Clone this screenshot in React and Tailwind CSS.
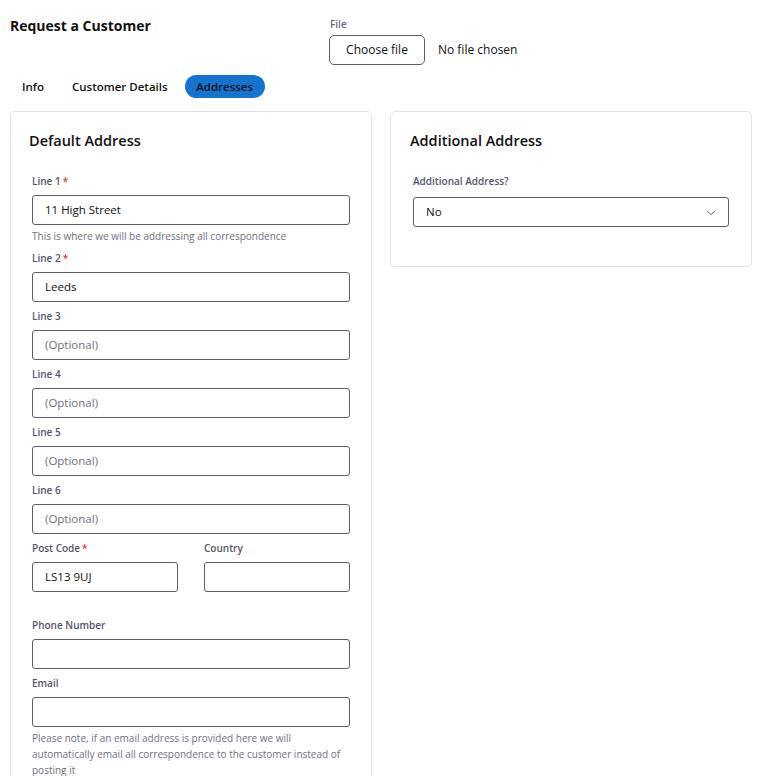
import { ChevronDown } from "lucide-react";

const font = { fontFamily: '"Open Sans", "Liberation Sans", sans-serif' };

function Label({ children, required, className = "mb-[7px]" }) {
  return (
    <div className={`text-[10px] font-semibold text-[#55556a] leading-[13px] ${className}`}>
      {children}
      {required ? <span className="text-[#d93a3a] ml-[2px]">*</span> : null}
    </div>
  );
}

function Field({ label, required, value, placeholder, help, className = "" }) {
  return (
    <div className={className}>
      <Label required={required}>{label}</Label>
      <div className="h-[30px] border border-[#5d5d6b] rounded-[3px] flex items-center pl-[12px] text-[11.5px] text-[#111]">
        {value ? value : <span className="text-[#6f6f7e]">{placeholder}</span>}
      </div>
      {help ? <div className="text-[10px] text-[#70707f] mt-[3px] leading-[16px]">{help}</div> : null}
    </div>
  );
}

export default function App() {
  return (
    <div className="bg-white min-h-screen w-[772px] text-[#111]" style={font}>
      <div className="flex pl-[10px] pt-[17px]">
        <h1 className="text-[14px] font-bold w-[319px] leading-[18px]">Request a Customer</h1>
        <div>
          <div className="text-[10px] font-semibold text-[#6a6a7a] ml-[1px] leading-[12px] mt-[1px]">File</div>
          <div className="flex items-center mt-[5px]">
            <div className="w-[96px] h-[30px] border border-[#5d5d6b] rounded-[5px] flex items-center justify-center text-[12px]">
              Choose file
            </div>
            <span className="ml-[13px] text-[12px]">No file chosen</span>
          </div>
        </div>
      </div>

      <div className="flex items-center pl-[10px] mt-[10px] text-[11.5px] font-semibold">
        <div className="px-[12px] h-[23px] flex items-center">Info</div>
        <div className="px-[15px] h-[23px] flex items-center ml-[1px]">Customer Details</div>
        <div className="h-[23px] flex items-center rounded-full bg-[#1473cf] text-[#111] ml-[2px] w-[80px] justify-center">
          Addresses
        </div>
      </div>

      <div className="flex items-start gap-[18px] pl-[10px] mt-[13px]">
        <div className="w-[362px] border border-[#e3e3e6] rounded-[5px] px-[21px] pt-[20px] pb-[10px]">
          <h2 className="text-[14.5px] font-semibold ml-[-3px] leading-[18px] mb-[25px]">Default Address</h2>
          <div className="flex flex-col gap-[8px]">
            <Field label="Line 1" required value="11 High Street" help="This is where we will be addressing all correspondence" />
            <Field label="Line 2" required value="Leeds" />
            <Field label="Line 3" placeholder="(Optional)" />
            <Field label="Line 4" placeholder="(Optional)" />
            <Field label="Line 5" placeholder="(Optional)" />
            <Field label="Line 6" placeholder="(Optional)" />
            <div className="flex gap-[26px]">
              <Field label="Post Code" required value="LS13 9UJ" className="flex-1" />
              <Field label="Country" className="flex-1" />
            </div>
            <Field label="Phone Number" className="mt-[19px]" />
            <Field
              label="Email"
              help="Please note, if an email address is provided here we will automatically email all correspondence to the customer instead of posting it"
            />
          </div>
        </div>

        <div className="w-[362px] border border-[#e3e3e6] rounded-[5px] px-[22px] pt-[20px] pb-[39px]">
          <h2 className="text-[14.5px] font-semibold ml-[-3px] leading-[18px] mb-[25px]">Additional Address</h2>
          <Label className="mb-[9px]">Additional Address?</Label>
          <div className="h-[30px] border border-[#5d5d6b] rounded-[3px] flex items-center justify-between pl-[12px] pr-[10px] text-[11.5px]">
            <span>No</span>
            <ChevronDown size={14} strokeWidth={1.5} className="text-[#444] mt-[2px]" />
          </div>
        </div>
      </div>
    </div>
  );
}
